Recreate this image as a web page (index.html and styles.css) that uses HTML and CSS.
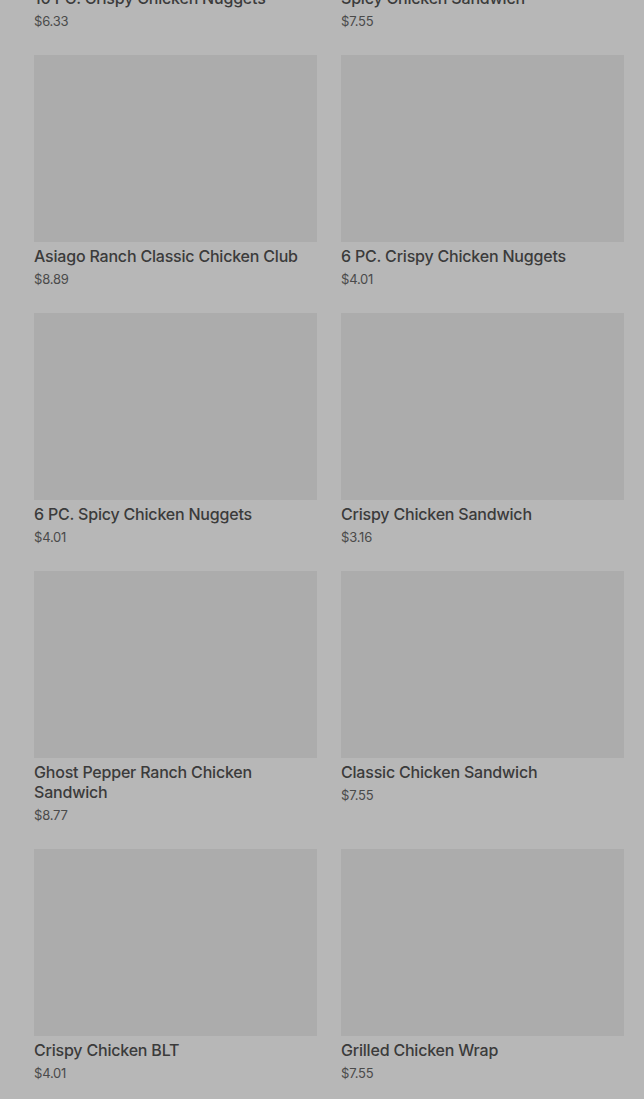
FILE: index.html
```html
<!DOCTYPE html>
<html lang="en">
<head>
    <meta charset="UTF-8">
    <meta name="viewport" content="width=device-width, initial-scale=1.0">
    <title>Menu</title>
    <link rel="stylesheet" href="styles.css">
</head>
<body>
    <div class="menu-grid">
        <div class="item">
            <div class="item-image"></div>
            <div class="item-name">10 PC. Crispy Chicken Nuggets</div>
            <div class="item-price">$6.33</div>
        </div>
        <div class="item">
            <div class="item-image"></div>
            <div class="item-name">Spicy Chicken Sandwich</div>
            <div class="item-price">$7.55</div>
        </div>
        <div class="item">
            <div class="item-image"></div>
            <div class="item-name">Asiago Ranch Classic Chicken Club</div>
            <div class="item-price">$8.89</div>
        </div>
        <div class="item">
            <div class="item-image"></div>
            <div class="item-name">6 PC. Crispy Chicken Nuggets</div>
            <div class="item-price">$4.01</div>
        </div>
        <div class="item">
            <div class="item-image"></div>
            <div class="item-name">6 PC. Spicy Chicken Nuggets</div>
            <div class="item-price">$4.01</div>
        </div>
        <div class="item">
            <div class="item-image"></div>
            <div class="item-name">Crispy Chicken Sandwich</div>
            <div class="item-price">$3.16</div>
        </div>
        <div class="item">
            <div class="item-image"></div>
            <div class="item-name">Ghost Pepper Ranch Chicken Sandwich</div>
            <div class="item-price">$8.77</div>
        </div>
        <div class="item">
            <div class="item-image"></div>
            <div class="item-name">Classic Chicken Sandwich</div>
            <div class="item-price">$7.55</div>
        </div>
        <div class="item">
            <div class="item-image"></div>
            <div class="item-name">Crispy Chicken BLT</div>
            <div class="item-price">$4.01</div>
        </div>
        <div class="item">
            <div class="item-image"></div>
            <div class="item-name">Grilled Chicken Wrap</div>
            <div class="item-price">$7.55</div>
        </div>
    </div>
</body>
</html>
```

FILE: styles.css
```css
body {
    margin: 0;
    padding: 0;
    background-color: #b7b7b7;
    font-family: Inter, "Liberation Sans", Arial, sans-serif;
    color: #3a3a3a;
}
.menu-grid {
    display: grid;
    grid-template-columns: 1fr 1fr;
    column-gap: 24px;
    row-gap: 24px;
    padding: 0 20px 40px 34px;
    margin-top: -203px;
}
.item-image {
    height: 187px;
    background-color: #acacac;
}
.item-name {
    margin-top: 4px;
    font-size: 16px;
    font-weight: 500;
    line-height: 20px;
    letter-spacing: -0.2px;
    color: #3b3b3b;
}
.item-price {
    margin-top: 3px;
    font-size: 13px;
    line-height: 20px;
    letter-spacing: -0.2px;
    color: #4a4a4a;
}
```
